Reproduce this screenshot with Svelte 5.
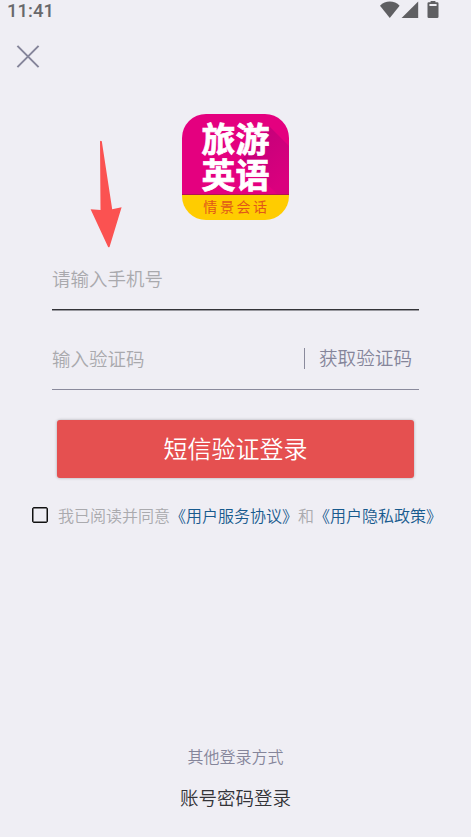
<script>
  let phone = $state('');
  let code = $state('');
  let agreed = $state(false);
</script>

<main class="screen" lang="zh-CN">
  <header class="statusbar">
    <span class="time">11:41</span>
    <svg class="system" width="60" height="20" viewBox="0 0 60 20" fill="#5f5f62">
      <path d="M0 5.8C5.2 0.2 14.5 0.2 19.6 5.8L9.8 18Z" />
      <path d="M38.2 1.5V18H21.6Z" />
      <path fill-rule="evenodd" d="M50.6 1H55.4V2.2H57.4Q58.5 2.2 58.5 3.5V16.7Q58.5 18 57.2 18H48.8Q47.5 18 47.5 16.7V3.5Q47.5 2.2 48.6 2.2H50.6ZM49.4 4V6H56.6V4Z" />
    </svg>
  </header>

  <button class="close" aria-label="关闭">
    <svg width="24" height="24" viewBox="0 0 24 24" fill="none" stroke="#85859a" stroke-width="2">
      <path d="M1.4 1.9L22.6 23.1M22.6 1.9L1.4 23.1" />
    </svg>
  </button>

  <div class="logo">
    <div class="logo-top">
      <span>旅游</span>
      <span>英语</span>
    </div>
    <div class="logo-bottom">情景会话</div>
  </div>

  <form class="form">
    <label class="field active">
      <input type="tel" placeholder="请输入手机号" bind:value={phone} />
    </label>
    <div class="field">
      <input type="text" placeholder="输入验证码" bind:value={code} />
      <button type="button" class="getcode">获取验证码</button>
    </div>
    <button type="button" class="submit">短信验证登录</button>
  </form>

  <label class="agree">
    <input type="checkbox" bind:checked={agreed} />
    <span>我已阅读并同意<b>《用户服务协议》</b>和<b>《用户隐私政策》</b></span>
  </label>

  <footer class="other">
    <p class="tip">其他登录方式</p>
    <button class="account">账号密码登录</button>
  </footer>

  <svg class="arrow" width="34" height="110" viewBox="0 0 34 110" fill="#fb5251">
    <path d="M10 1.2Q10.8 0.5 11.8 1.2L22.2 69.3L31.6 67.2L19.6 106.8Q19 107.9 18 106.8L0.6 69.2L10.5 70Z" />
  </svg>
</main>

<style>
  :global(body) {
    background: #efeef4;
  }
  .screen {
    position: relative;
    box-sizing: border-box;
    width: 471px;
    height: 837px;
    display: flex;
    flex-direction: column;
    overflow: hidden;
    background: #efeef4;
    font-family: "Noto Sans CJK SC", sans-serif;
    font-weight: 350;
  }
  button {
    border: none;
    background: none;
    padding: 0;
    font-family: inherit;
    font-weight: inherit;
    cursor: pointer;
  }
  .statusbar {
    display: flex;
    justify-content: space-between;
    height: 22px;
    padding: 0 31px 0 7px;
  }
  .time {
    font: 500 18.5px/22px Roboto, sans-serif;
    color: #68686b;
  }
  .close {
    width: 24px;
    height: 24px;
    margin: 22px 0 0 16px;
  }
  .close svg {
    display: block;
  }
  .logo {
    width: 107px;
    height: 106px;
    margin: 46px auto 0;
    border-radius: 24px;
    overflow: hidden;
  }
  .logo-top {
    position: relative;
    box-sizing: border-box;
    height: 81px;
    padding-top: 6px;
    display: flex;
    flex-direction: column;
    align-items: center;
    border-bottom: 1px solid #b0154f;
    background: #e4007f;
    color: #fff;
    font-size: 34px;
    font-weight: 700;
    line-height: 36px;
    -webkit-text-stroke: 0.7px #fff;
  }
  /* long shadow behind the title */
  .logo-top::before {
    content: "";
    position: absolute;
    inset: 0;
    background: linear-gradient(135deg, #c4007a 50%, #da007e 90%);
    clip-path: polygon(87px 12px, 107px 32px, 107px 80px, 95px 80px, 60px 45px);
  }
  .logo-top span {
    position: relative;
  }
  .logo-bottom {
    height: 25px;
    background: #fc0;
    color: #e0571a;
    font-size: 14px;
    font-weight: 400;
    line-height: 23px;
    letter-spacing: 2.6px;
    text-align: center;
    text-indent: 2px;
  }
  .form {
    display: flex;
    flex-direction: column;
    gap: 18px;
    margin: 28px 52px 0;
  }
  .field {
    box-sizing: border-box;
    height: 62px;
    display: flex;
    align-items: center;
    border-bottom: 1px solid #8a8a9c;
  }
  .field.active {
    border-color: #333338;
    box-shadow: 0 1px #99999f;
  }
  .field input {
    flex: 1;
    min-width: 0;
    padding: 0 0 2px;
    border: none;
    outline: none;
    background: none;
    font-family: inherit;
    font-size: 18.5px;
    font-weight: inherit;
  }
  .field input::placeholder {
    color: #a9a9ad;
  }
  .getcode {
    height: 21px;
    padding: 0 7px 3px 14px;
    border-left: 1px solid #8a8a9c;
    color: #85859a;
    font-size: 18.6px;
    line-height: 18px;
  }
  .submit {
    height: 58px;
    margin: 12px 5px 0;
    padding-bottom: 4px;
    border-radius: 3px;
    background: #e55050;
    box-shadow: 0 0 3px rgba(0, 0, 0, 0.3);
    color: #fff;
    font-size: 24px;
  }
  .agree {
    display: flex;
    align-items: center;
    height: 24px;
    margin: 25px 0 0 32px;
    color: #aaaaae;
    font-size: 16px;
    line-height: 24px;
    white-space: nowrap;
  }
  .agree input {
    appearance: none;
    box-sizing: border-box;
    width: 16px;
    height: 16px;
    margin: 0 10px 0 0;
    border: 1px solid #111;
    box-shadow: inset 0 0 0 0.5px #111;
    border-radius: 2px;
  }
  .agree b {
    color: #175a8e;
    font-weight: inherit;
  }
  .other {
    margin-top: auto;
    padding-bottom: 26px;
    text-align: center;
  }
  .tip {
    margin: 0 0 15px;
    color: #85859a;
    font-size: 16px;
    line-height: 24px;
  }
  .account {
    display: block;
    margin: 0 auto;
    color: #333338;
    font-size: 18.5px;
    line-height: 28px;
  }
  .arrow {
    position: absolute;
    left: 90px;
    top: 140px;
  }
</style>
